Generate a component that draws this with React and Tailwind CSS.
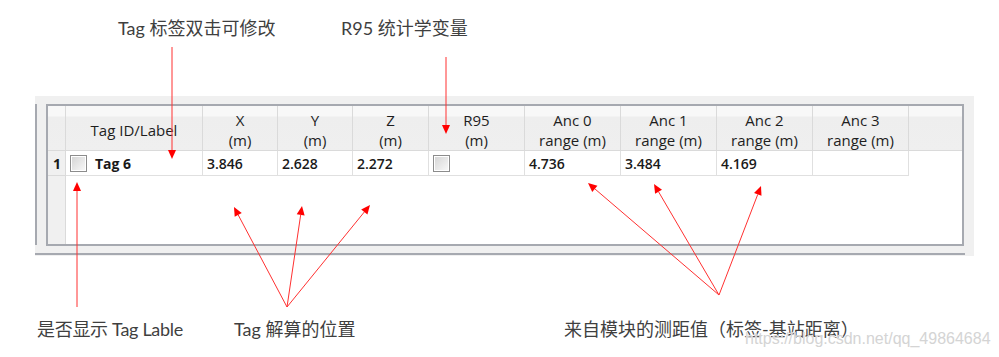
import React from "react";

const annFont = { fontFamily: "Lato, 'Noto Sans CJK SC', sans-serif" };

const cols = [
  { w: "w-[137px]", h: ["Tag ID/Label"], d: "tag" },
  { w: "w-[75px]", h: ["X", "(m)"], d: "3.846" },
  { w: "w-[75px]", h: ["Y", "(m)"], d: "2.628" },
  { w: "w-[76px]", h: ["Z", "(m)"], d: "2.272" },
  { w: "w-[96px]", h: ["R95", "(m)"], d: "check" },
  { w: "w-[96px]", h: ["Anc 0", "range (m)"], d: "4.736" },
  { w: "w-[96px]", h: ["Anc 1", "range (m)"], d: "3.484" },
  { w: "w-[96px]", h: ["Anc 2", "range (m)"], d: "4.169" },
  { w: "w-[96px]", h: ["Anc 3", "range (m)"], d: "" },
];

function CheckBox() {
  return (
    <div className="w-[17px] h-[17px] shrink-0 border border-[#8c8c8c] bg-white p-[1px]">
      <div className="w-full h-full bg-[linear-gradient(135deg,#d6d6d6,#f7f7f7)]" />
    </div>
  );
}

const headerBg =
  "bg-[linear-gradient(#f8f8f8_0,#f8f8f8_10px,#eeeeee_11px,#efefef_100%)]";

function Arrow({ x1, y1, x2, y2 }) {
  const dx = x2 - x1;
  const dy = y2 - y1;
  const len = Math.hypot(dx, dy);
  const ux = dx / len;
  const uy = dy / len;
  const hl = 9;
  const hw = 4;
  const bx = x2 - ux * hl;
  const by = y2 - uy * hl;
  const p1 = `${bx - uy * hw},${by + ux * hw}`;
  const p2 = `${bx + uy * hw},${by - ux * hw}`;
  return (
    <g>
      <line x1={x1} y1={y1} x2={bx} y2={by} stroke="#ff3030" strokeWidth="1" />
      <polygon points={`${x2},${y2} ${p1} ${p2}`} fill="#ff0000" />
    </g>
  );
}

export default function App() {
  return (
    <div
      className="relative w-[999px] h-[357px] bg-white overflow-hidden"
      style={{ fontFamily: "'Open Sans', 'Noto Sans CJK SC', sans-serif" }}
    >
      {/* top annotations */}
      <div className="h-[96px] flex items-start pt-[15px] text-[18px] leading-[26px] text-[#3f3f3f]" style={annFont}>
        <div className="w-[341px] pl-[118px]">Tag 标签双击可修改</div>
        <div>R95 统计学变量</div>
      </div>

      {/* panel */}
      <div className="ml-[35px] w-[939px] h-[160px] bg-[#f0f0f0] flex flex-col">
        <div className="flex items-start pt-[8px]">
          <div className="w-[2px] h-[141px] bg-[#a6a9b0]" />
          <div className="ml-[9px] w-[918px] h-[142px] border-2 border-[#a6a9b0] bg-white flex flex-col">
            {/* header */}
            <div className={`flex h-[45px] ${headerBg} text-[15px] leading-[20px] text-[#1e1e1e]`}>
              <div className="w-[18px] h-full border-r border-b border-[#dadada]" />
              {cols.map((c, i) => (
                <div
                  key={i}
                  className={`${c.w} h-full border-r border-b border-[#dadada] flex flex-col items-center justify-center pt-[3px]`}
                >
                  {c.h.map((t, j) => (
                    <div key={j}>{t}</div>
                  ))}
                </div>
              ))}
              <div className="flex-1 h-full border-b border-[#dadada]" />
            </div>
            {/* body */}
            <div className="flex flex-1">
              <div className="w-[18px] h-full bg-[#f0f0f0] border-r border-[#dadada]">
                <div className="h-[25px] border-b border-[#dadada] flex items-center pl-[5px] text-[14px] font-bold text-[#1a1a1a]">
                  1
                </div>
              </div>
              <div className="flex-1 flex flex-col">
                <div className="flex h-[25px] text-[14px] font-semibold text-[#1a1a1a]">
                  {cols.map((c, i) => (
                    <div
                      key={i}
                      className={`${c.w} h-full border-r border-b border-[#e0e0e0] flex items-center pl-[4px]`}
                    >
                      {c.d === "tag" ? (
                        <div className="flex items-center gap-[8px]">
                          <CheckBox />
                          <span className="font-bold">Tag 6</span>
                        </div>
                      ) : c.d === "check" ? (
                        <CheckBox />
                      ) : (
                        c.d
                      )}
                    </div>
                  ))}
                </div>
              </div>
            </div>
          </div>
        </div>
        <div className="mt-[7px] h-[2px] w-[930px] bg-[#a6a9b0]" />
      </div>

      {/* bottom annotations */}
      <div className="flex items-start pt-[60px] text-[18px] leading-[26px] text-[#3f3f3f]" style={annFont}>
        <div className="w-[234px] pl-[37px] tracking-[-0.3px]">是否显示 Tag Lable</div>
        <div className="w-[330px]">Tag 解算的位置</div>
        <div>来自模块的测距值（标签-基站距离）</div>
      </div>

      {/* watermark */}
      <div
        className="absolute left-[745px] top-[329px] text-[16px] leading-[20px] text-[#d4d4d4]"
        style={{ fontFamily: "'Liberation Sans', Arial, sans-serif", textShadow: "0 0 1px #ffffff" }}
      >
        https://blog.csdn.net/qq_49864684
      </div>

      {/* arrows */}
      <svg className="absolute inset-0 pointer-events-none" width="999" height="357">
        <Arrow x1={172} y1={47} x2={172} y2={159} />
        <Arrow x1={446} y1={57} x2={446} y2={134} />
        <Arrow x1={77} y1={307} x2={77} y2={182} />
        <Arrow x1={287} y1={307} x2={234} y2={207} />
        <Arrow x1={287} y1={307} x2={302} y2={206} />
        <Arrow x1={287} y1={307} x2={370} y2={205} />
        <Arrow x1={719} y1={295} x2={588} y2={183} />
        <Arrow x1={719} y1={295} x2={654} y2={184} />
        <Arrow x1={719} y1={295} x2={761} y2={186} />
      </svg>
    </div>
  );
}
